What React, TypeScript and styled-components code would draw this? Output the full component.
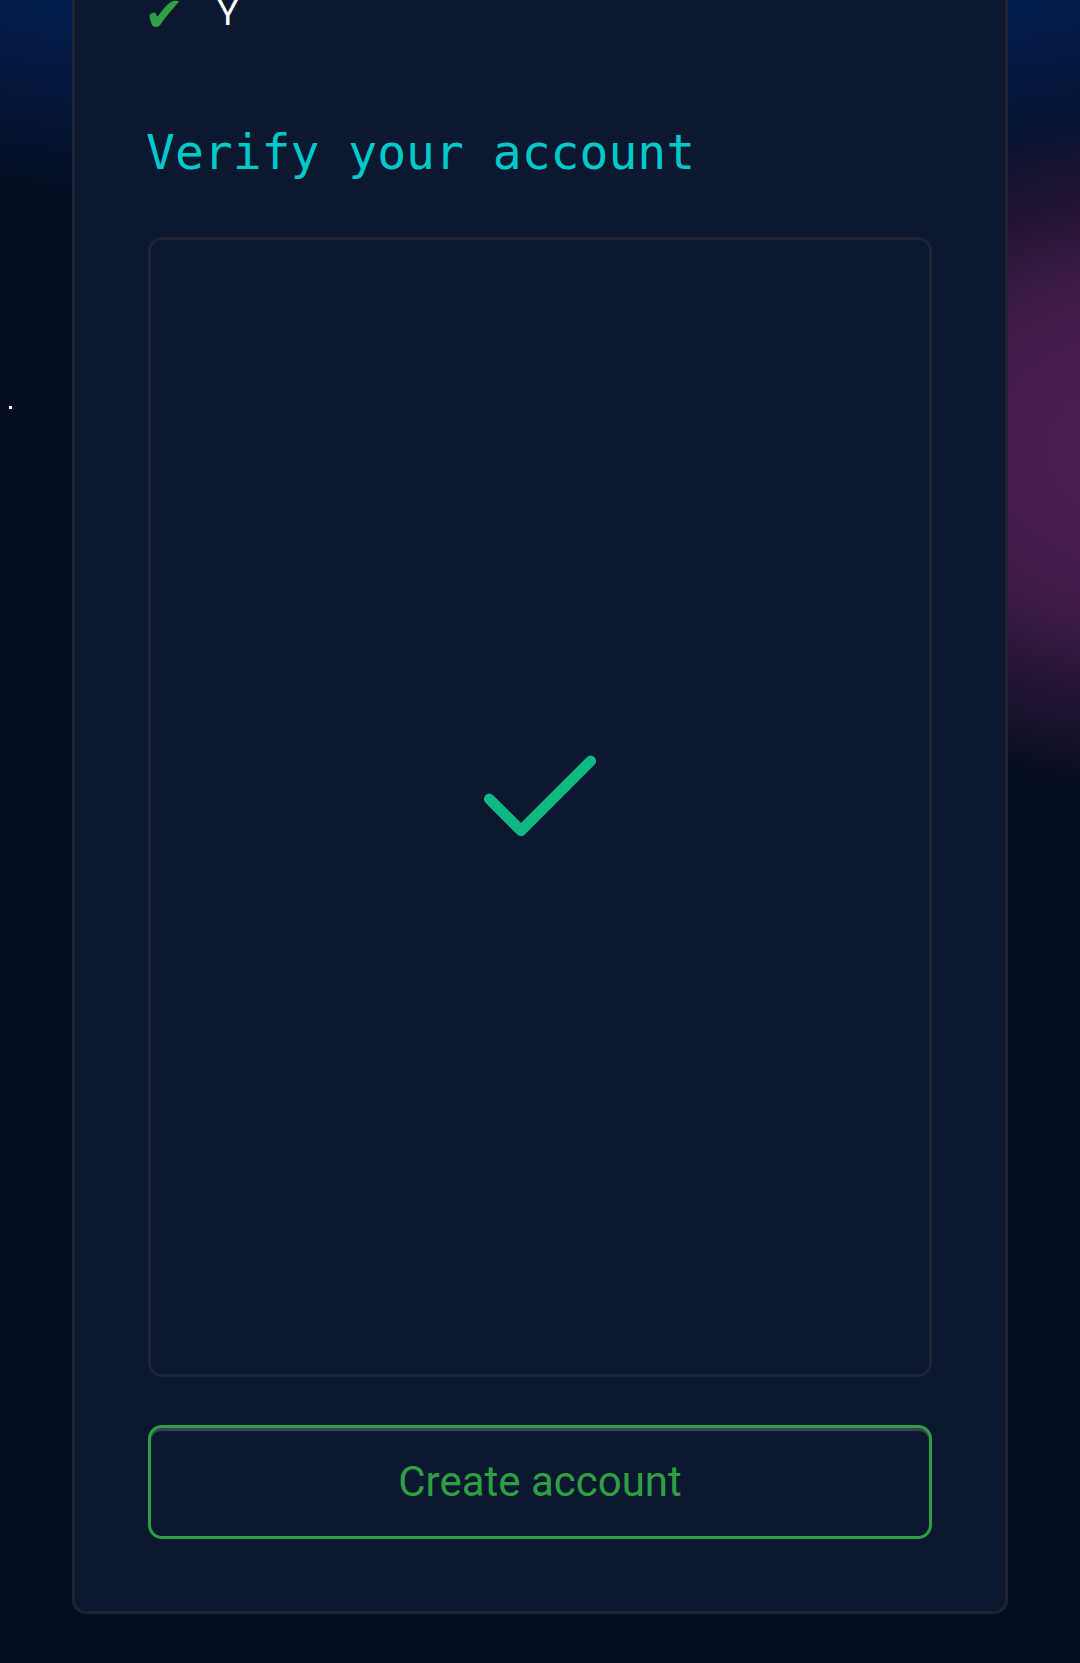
import styled, { createGlobalStyle } from "styled-components";
import { Check } from "lucide-react";

const GlobalStyle = createGlobalStyle`
  html, body {
    margin: 0;
    padding: 0;
    background: #050d20;
  }
  * {
    box-sizing: border-box;
  }
`;

const Page = styled.div`
  position: relative;
  min-height: 1663px;
  overflow: hidden;
  padding-bottom: 51px;
  background:
    radial-gradient(ellipse 430px 340px at 106% 450px, rgba(80, 31, 84, 1) 0%, rgba(72, 29, 78, 0.92) 45%, rgba(40, 20, 55, 0) 100%),
    radial-gradient(ellipse 1400px 300px at 50% -80px, #003286 0%, rgba(0, 40, 110, 0.5) 50%, rgba(5, 13, 32, 0) 100%),
    #050d20;
`;

const Star = styled.span`
  position: absolute;
  left: 9px;
  top: 406px;
  width: 3px;
  height: 3px;
  background: #ffffff;
`;

const Card = styled.div`
  width: 936px;
  margin: -56px auto 0;
  padding: 40px 73px 72px;
  display: flex;
  flex-direction: column;
  background: #0c1730;
  border: 3px solid #1d2436;
  border-radius: 14px;
`;

const Requirement = styled.div`
  display: flex;
  align-items: baseline;
  gap: 33px;
  height: 43px;
  line-height: 43px;
`;

const Tick = styled.span`
  margin-left: -4px;
  font-family: "DejaVu Sans", sans-serif;
  font-size: 48px;
  color: #2ea043;
  position: relative;
  top: 6px;
`;

const RequirementText = styled.span`
  font-family: Roboto, "Liberation Sans", sans-serif;
  font-size: 35px;
  color: #ffffff;
`;

const Title = styled.h2`
  margin: 94px 0 0 -2px;
  font-family: "DejaVu Sans Mono", "Liberation Mono", monospace;
  font-weight: 400;
  font-size: 48px;
  line-height: 1.2;
  color: #00c9c9;
`;

const Challenge = styled.div`
  margin-top: 55px;
  height: 1140px;
  padding-bottom: 16px;
  display: flex;
  align-items: center;
  justify-content: center;
  background: #0c1730;
  border: 3px solid #1d2436;
  border-radius: 14px;
  color: #10b981;
`;

const SubmitButton = styled.button`
  margin-top: 48px;
  height: 114px;
  width: 100%;
  background: #0c1730;
  border: 3px solid #2ea043;
  border-radius: 14px;
  box-shadow: inset 0 3px 0 #394055;
  font-family: Roboto, "Liberation Sans", sans-serif;
  font-size: 42px;
  color: #2ea043;
  cursor: pointer;
`;

const App = () => {
  return (
    <Page>
      <GlobalStyle />
      <Star />
      <Card>
        <Requirement>
          <Tick>✔</Tick>
          <RequirementText>Y</RequirementText>
        </Requirement>
        <Title>Verify your account</Title>
        <Challenge>
          <Check size={152} strokeWidth={1.7} />
        </Challenge>
        <SubmitButton>Create account</SubmitButton>
      </Card>
    </Page>
  );
};

export default App;
